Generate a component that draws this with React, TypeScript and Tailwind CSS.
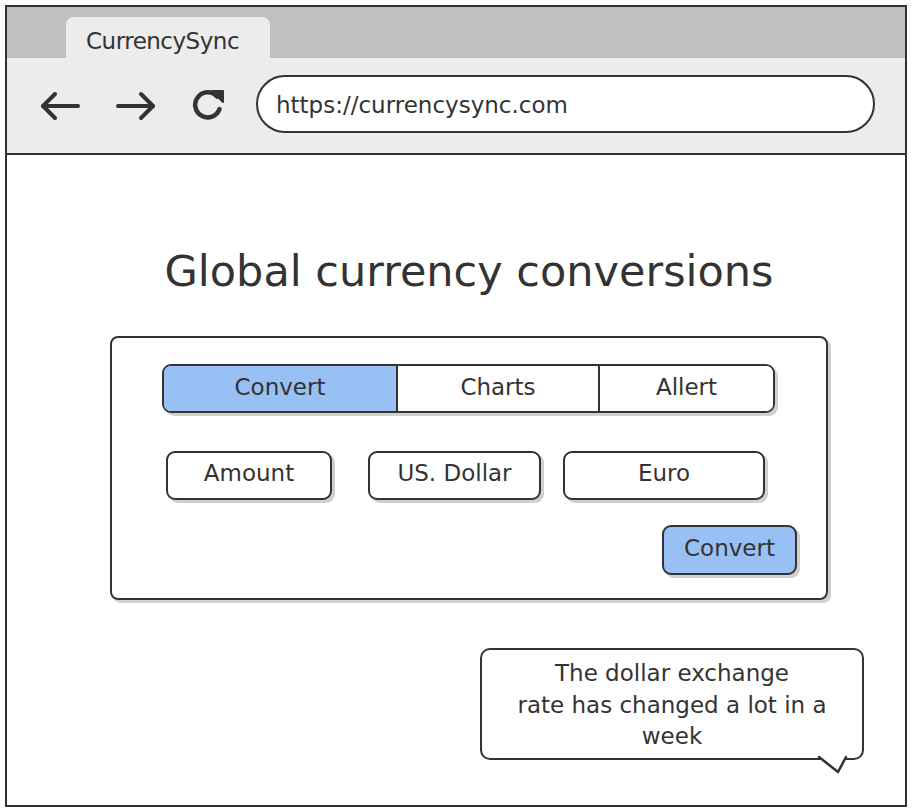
import React from "react";

const ink = "#333333";

const Back = () => (
  <svg width="44" height="36" viewBox="0 0 44 36" fill="none" stroke={ink} strokeWidth="4" strokeLinecap="round" strokeLinejoin="round">
    <path d="M40 18H5" />
    <path d="M17 6L5 18l12 12" />
  </svg>
);

const Forward = () => (
  <svg width="44" height="36" viewBox="0 0 44 36" fill="none" stroke={ink} strokeWidth="4" strokeLinecap="round" strokeLinejoin="round">
    <path d="M4 18h35" />
    <path d="M27 6l12 12-12 12" />
  </svg>
);

const Reload = () => (
  <svg width="40" height="40" viewBox="0 0 40 40" fill="none">
    <path d="M29 11.5A12.5 12.5 0 1 0 31.5 24" stroke={ink} strokeWidth="4.5" strokeLinecap="round" />
    <path d="M24 6h11v11z" fill={ink} stroke={ink} strokeWidth="2" strokeLinejoin="round" />
  </svg>
);

const font = "font-['DejaVu_Sans','Noto_Sans',sans-serif]";

export default function App() {
  const tabs = [
    { name: "Convert", w: "w-[232px]", active: true },
    { name: "Charts", w: "w-[202px]", active: false },
    { name: "Allert", w: "flex-1", active: false },
  ];

  const fields = [
    { name: "Amount", w: "w-[166px]", ml: "ml-0" },
    { name: "US. Dollar", w: "w-[173px]", ml: "ml-[36px]" },
    { name: "Euro", w: "w-[202px]", ml: "ml-[22px]" },
  ];

  return (
    <div className={`w-[912px] h-[812px] bg-white p-[5px] text-[#333] ${font}`}>
      <div className="w-full h-full border-2 border-[#333] flex flex-col">
        {/* Tab strip */}
        <div className="h-[51px] bg-[#c0c0c0] pl-[59px] pt-[10px] flex">
          <div className="w-[204px] bg-[#ececec] rounded-t-lg pl-[20px] pt-[10px] text-[23px] leading-[28px] tracking-[-0.5px]">
            CurrencySync
          </div>
        </div>

        {/* Toolbar */}
        <div className="h-[97px] bg-[#ececec] border-b-2 border-[#333] flex items-center pl-[31px]">
          <Back />
          <div className="ml-[32px]">
            <Forward />
          </div>
          <div className="ml-[30px] mt-[-2px]">
            <Reload />
          </div>
          <div className="ml-[28px] mt-[-4px] w-[619px] h-[58px] rounded-full border-2 border-[#333] bg-white flex items-center pl-[18px] pt-[4px] text-[23px]">
            https://currencysync.com
          </div>
        </div>

        {/* Content */}
        <div className="flex flex-col flex-1">
          <h1 className="mt-[90px] ml-[103px] w-[718px] text-center text-[43px] leading-[52px]">
            Global currency conversions
          </h1>

          <div className="mt-[39px] ml-[103px] w-[718px] h-[264px] border-2 border-[#333] rounded-[8px] shadow-[3px_3px_0_#d0d0d0] pt-[26px] pl-[50px]">
            <div className="w-[613px] h-[49px] flex border-2 border-[#333] rounded-[9px] overflow-hidden shadow-[3px_3px_0_#d0d0d0] text-[23px]">
              {tabs.map((t, i) => (
                <div
                  key={t.name}
                  className={`${t.w} flex items-center justify-center pb-[2px] ${t.active ? "bg-[#99c0f4]" : "bg-white"} ${i > 0 ? "border-l-2 border-[#333]" : ""}`}
                >
                  {t.name}
                </div>
              ))}
            </div>

            <div className="flex mt-[38px] ml-[4px]">
              {fields.map((f) => (
                <div
                  key={f.name}
                  className={`${f.w} ${f.ml} h-[49px] border-2 border-[#333] rounded-[9px] bg-white shadow-[3px_3px_0_#d0d0d0] flex items-center justify-center text-[23px] pb-[4px]`}
                >
                  {f.name}
                </div>
              ))}
            </div>

            <div className="flex mt-[25px] ml-[500px]">
              <div className="w-[135px] h-[50px] border-2 border-[#333] rounded-[9px] bg-[#99c0f4] shadow-[3px_3px_0_#d0d0d0] flex items-center justify-center text-[23px] pb-[3px]">
                Convert
              </div>
            </div>
          </div>

          {/* Speech bubble */}
          <div className="mt-[48px] ml-[473px] relative w-[384px] h-[112px]">
            <div className="w-full h-full border-2 border-[#333] rounded-[10px] bg-white flex flex-col items-center justify-center text-center text-[23px] leading-[31.5px] pt-[3px]">
              <span>The dollar exchange</span>
              <span>rate has changed a lot in a</span>
              <span>week</span>
            </div>
            <svg className="absolute left-[336px] top-[106px]" width="40" height="26" viewBox="0 0 40 26" fill="none">
              <path d="M4 2 L30 2" stroke="white" strokeWidth="5" />
              <path d="M3 3 L22 18 L30 3" stroke={ink} strokeWidth="2.5" strokeLinecap="round" strokeLinejoin="round" fill="white" />
            </svg>
          </div>
        </div>
      </div>
    </div>
  );
}
